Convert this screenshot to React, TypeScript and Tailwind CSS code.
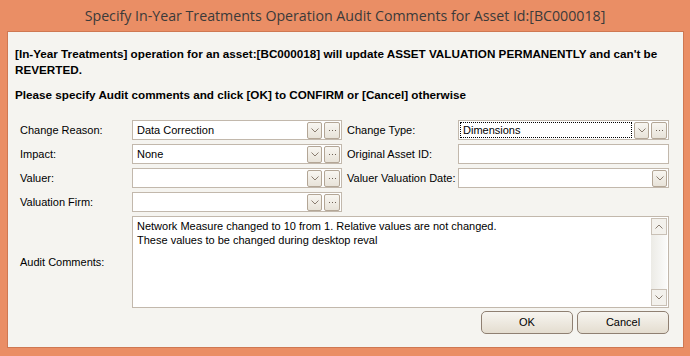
import React from "react";

const Chevron = ({ up = false }: { up?: boolean }) => (
  <svg width="8" height="5" viewBox="0 0 8 5">
    <path
      d={up ? "M0.5 4.5 L4 1 L7.5 4.5" : "M0.5 0.5 L4 4 L7.5 0.5"}
      fill="none"
      stroke="#8a7d70"
      strokeWidth="1"
    />
  </svg>
);

const DropBtn = () => (
  <div className="flex h-[17px] w-[15px] shrink-0 items-center justify-center rounded-[2px] border border-[#b3a696] bg-linear-to-b from-[#f8f6f1] to-[#e8e3d9]">
    <Chevron />
  </div>
);

const EllipsisBtn = () => (
  <div className="flex h-[17px] w-[16px] shrink-0 items-center justify-center gap-[2px] rounded-[2px] border border-[#b3a696] bg-linear-to-b from-[#f8f6f1] to-[#e8e3d9]">
    <span className="h-[1px] w-[1px] bg-[#6f6256]" />
    <span className="h-[1px] w-[1px] bg-[#6f6256]" />
    <span className="h-[1px] w-[1px] bg-[#6f6256]" />
  </div>
);

interface ComboProps {
  value?: string;
  width: string;
  ellipsis?: boolean;
  dropdown?: boolean;
  focused?: boolean;
}

const Combo = ({ value = "", width, ellipsis = true, dropdown = true, focused = false }: ComboProps) => (
  <div className={`flex h-[20px] ${width} shrink-0 items-center gap-[2px] border border-[#c2b8ac] bg-white pl-[1px] pr-[1px]`}>
    <div
      className={`flex h-[16px] flex-1 items-center pl-[2px] ${
        focused ? "border border-dotted border-black" : "border border-transparent"
      }`}
    >
      {value}
    </div>
    {dropdown && <DropBtn />}
    {ellipsis && <EllipsisBtn />}
  </div>
);

const Label = ({ text, width }: { text: string; width: string }) => (
  <div className={`${width} shrink-0`}>{text}</div>
);

const DialogButton = ({ text }: { text: string }) => (
  <button className="h-[23px] w-[92px] rounded-[5px] border border-[#8f8072] bg-linear-to-b from-[#f7f5f0] to-[#e4ddd0] text-[11px] text-black">
    {text}
  </button>
);

export default function App() {
  return (
    <div className="flex h-[356px] w-[690px] flex-col bg-[#ea8e65] font-['Liberation_Sans',Arial,sans-serif] text-[11px] text-black">
      <div className="flex h-[31px] items-center justify-center pt-[1px] font-['Open_Sans','Noto_Sans',sans-serif] text-[14.2px] text-[#3a3a3a]">
        Specify In-Year Treatments Operation Audit Comments for Asset Id:[BC000018]
      </div>
      <div className="ml-[7px] mr-[6px] flex h-[317px] flex-col border border-[#cf7852] bg-[#f5f4f0]">
        <div className="pl-[7px] pt-[14px] text-[11.7px] font-bold leading-[16px]">
          <div className="whitespace-nowrap">
            [In-Year Treatments] operation for an asset:[BC000018] will update ASSET VALUATION PERMANENTLY and can't be
          </div>
          <div>REVERTED.</div>
          <div className="mt-[9px]">Please specify Audit comments and click [OK] to CONFIRM or [Cancel] otherwise</div>
        </div>

        <div className="mt-[17px] flex flex-col gap-[4px] pl-[12px]">
          <div className="flex items-center">
            <Label text="Change Reason:" width="w-[112px]" />
            <Combo value="Data Correction" width="w-[210px]" />
            <div className="w-[5px]" />
            <Label text="Change Type:" width="w-[111px]" />
            <Combo value="Dimensions" width="w-[211px]" focused />
          </div>
          <div className="flex items-center">
            <Label text="Impact:" width="w-[112px]" />
            <Combo value="None" width="w-[210px]" />
            <div className="w-[5px]" />
            <Label text="Original Asset ID:" width="w-[111px]" />
            <Combo width="w-[211px]" dropdown={false} ellipsis={false} />
          </div>
          <div className="flex items-center">
            <Label text="Valuer:" width="w-[112px]" />
            <Combo width="w-[210px]" />
            <div className="w-[5px]" />
            <Label text="Valuer Valuation Date:" width="w-[111px]" />
            <Combo width="w-[211px]" ellipsis={false} />
          </div>
          <div className="flex items-center">
            <Label text="Valuation Firm:" width="w-[112px]" />
            <Combo width="w-[210px]" />
          </div>
          <div className="flex items-center">
            <Label text="Audit Comments:" width="w-[112px]" />
            <div className="flex h-[92px] w-[537px] border border-[#c2b8ac] bg-white">
              <div className="flex-1 pl-[4px] pt-[2px] leading-[14px]">
                <div>Network Measure changed to 10 from 1. Relative values are not changed.</div>
                <div>These values to be changed during desktop reval</div>
              </div>
              <div className="flex w-[18px] flex-col p-[1px]">
                <div className="flex h-[17px] items-center justify-center border border-[#c9c0b5] bg-[#f3f1ec]">
                  <Chevron up />
                </div>
                <div className="flex-1 bg-linear-to-r from-[#ecebe6] to-[#fbfbfa]" />
                <div className="flex h-[17px] items-center justify-center border border-[#c9c0b5] bg-[#f3f1ec]">
                  <Chevron />
                </div>
              </div>
            </div>
          </div>
        </div>

        <div className="mt-[3px] flex justify-end gap-[4px] pr-[14px]">
          <DialogButton text="OK" />
          <DialogButton text="Cancel" />
        </div>
      </div>
    </div>
  );
}
